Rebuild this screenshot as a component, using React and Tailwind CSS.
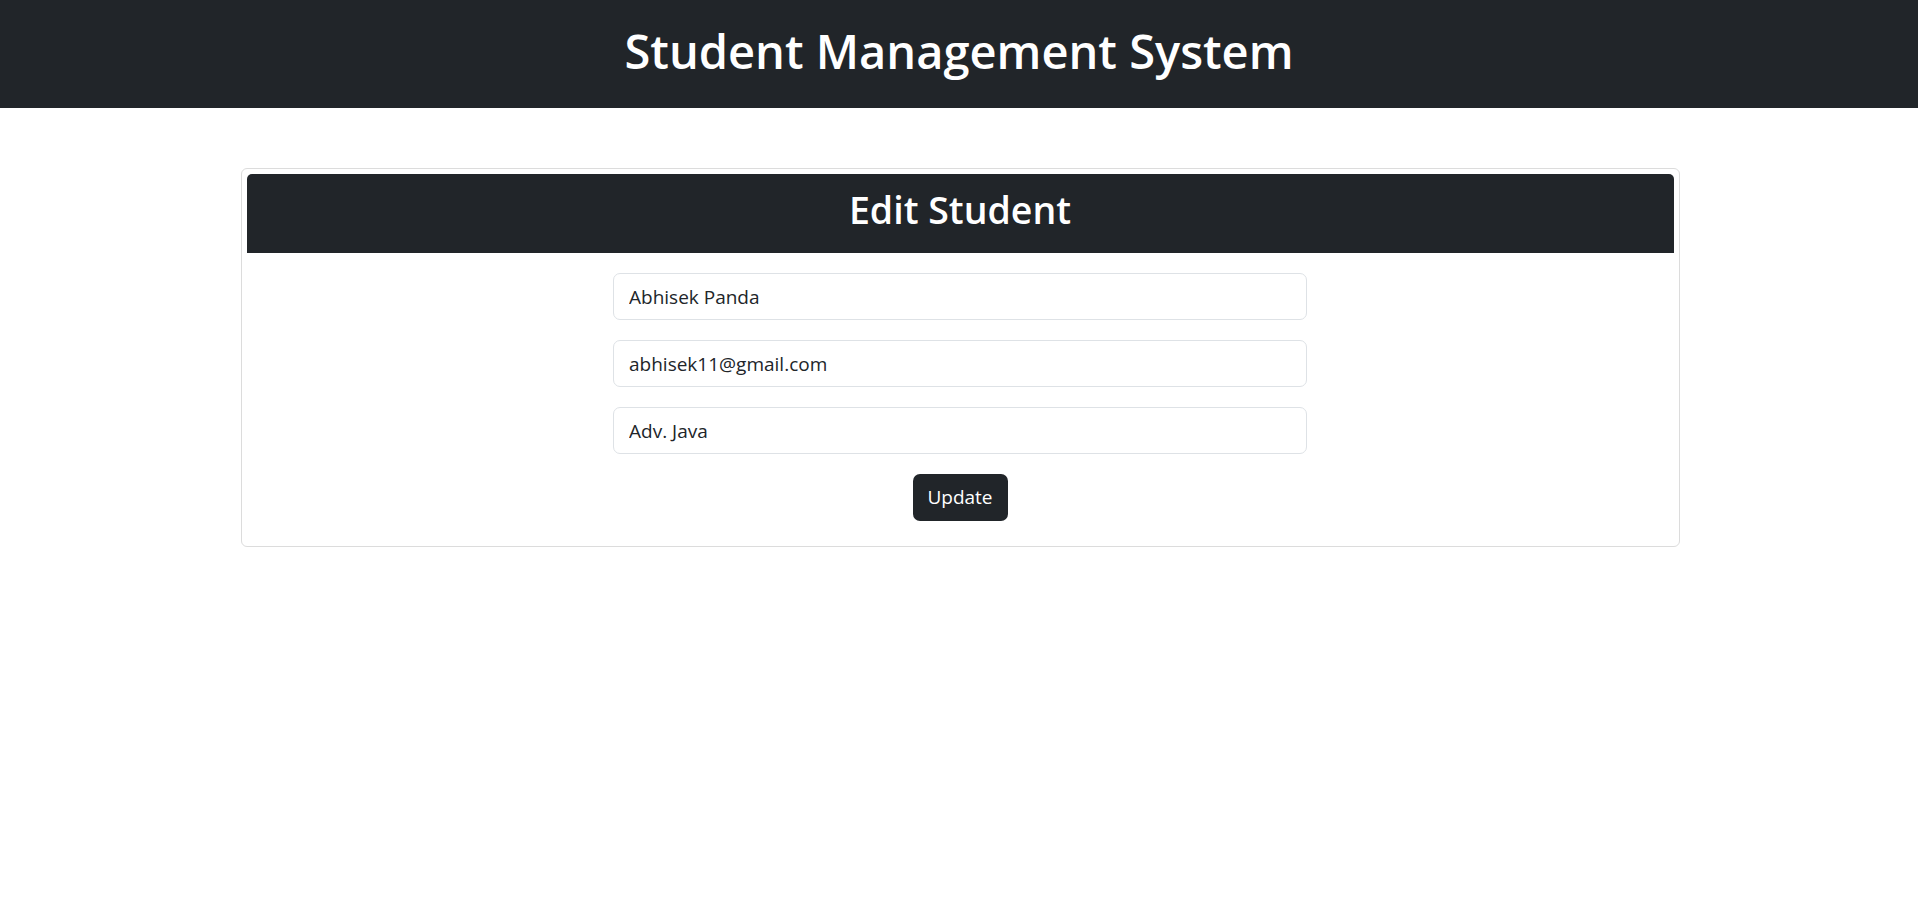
export default function App() {
  const font = { fontFamily: '"Open Sans", "Noto Sans", sans-serif' };
  return (
    <div className="min-h-[905px] bg-white" style={font}>
      <header className="h-[108px] bg-[#212529] flex items-center justify-center">
        <h1 className="text-white text-[47px] font-semibold leading-none pb-[6px]">Student Management System</h1>
      </header>
      <div className="pt-[60px] pl-[2px]">
        <div className="mx-auto w-[1439px] border border-[#dcdcdc] rounded-[6px] p-[5px] pb-[25px]">
          <div className="h-[79px] bg-[#212529] rounded-t-[5px] flex items-center justify-center">
            <h2 className="text-white text-[37.5px] font-semibold leading-none pb-[8px]">Edit Student</h2>
          </div>
          <form className="mt-[20px] flex flex-col items-center gap-[20px]">
            <input
              className="w-[694px] h-[47px] border border-[#dee2e6] rounded-[7px] px-[15px] text-[19px] text-[#212529] outline-none"
              defaultValue="Abhisek Panda"
            />
            <input
              className="w-[694px] h-[47px] border border-[#dee2e6] rounded-[7px] px-[15px] text-[19px] text-[#212529] outline-none"
              defaultValue="abhisek11@gmail.com"
            />
            <input
              className="w-[694px] h-[47px] border border-[#dee2e6] rounded-[7px] px-[15px] text-[19px] text-[#212529] outline-none"
              defaultValue="Adv. Java"
            />
            <button
              type="button"
              className="w-[95px] h-[47px] bg-[#212529] text-white text-[19px] rounded-[7px]"
            >
              Update
            </button>
          </form>
        </div>
      </div>
    </div>
  );
}
